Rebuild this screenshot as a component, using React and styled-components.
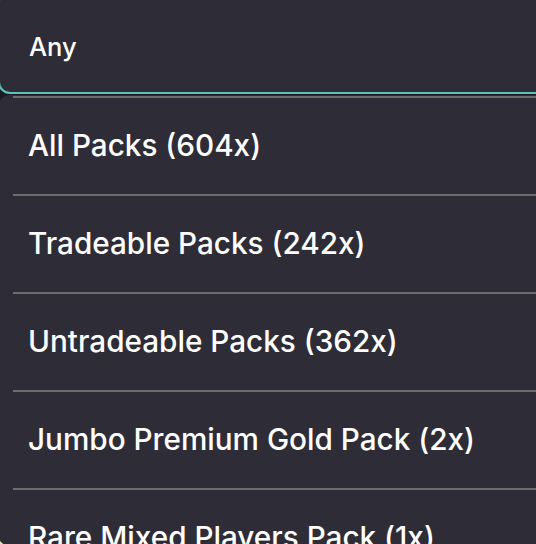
import styled, { createGlobalStyle } from "styled-components";

const GlobalStyle = createGlobalStyle`
    html, body {
        margin: 0;
        padding: 0;
        overflow: hidden;
        background: #1c1b21;
    }
    body {
        font-family: Inter, "Noto Sans", sans-serif;
        -webkit-font-smoothing: antialiased;
    }
`

const Pagina = styled.div`
        width: 536px;
        height: 544px;
        overflow: hidden;
        background: linear-gradient(to bottom, #1c1b21 0 500px, #f2e29a 500px);
`

const CampoSelect = styled.div`
        margin: -10px -20px 0 -2px;
        border: 2px solid #5ec3bb;
        border-radius: 12px;
        background-color: #2e2d37;
        display: flex;
        align-items: center;
        padding: 9px 0 0 29px;
        box-sizing: border-box;
        height: 104px;
        color: #ffffff;
        font-size: 25.5px;
        font-weight: 500;
`

const Lista = styled.ul`
        list-style: none;
        margin: 1px -20px 0 -2px;
        padding: 1px 0 0 0;
        height: 451px;
        overflow: hidden;
        background-color: #2e2d37;
        border-radius: 12px;
        box-sizing: border-box;
`

const Item = styled.li`
        margin-left: 15px;
        height: 98px;
        border-top: 2px solid #6d6d6d;
        box-sizing: border-box;
        display: flex;
        align-items: center;
        padding: 0 0 3px 15px;
        color: #ffffff;
        font-size: 29.7px;
        font-weight: 500;
        white-space: nowrap;
`

const opcoes = [
    "All Packs (604x)",
    "Tradeable Packs (242x)",
    "Untradeable Packs (362x)",
    "Jumbo Premium Gold Pack (2x)",
    "Rare Mixed Players Pack (1x)",
]

export default function App() {
    return (
        <Pagina>
            <GlobalStyle />
            <CampoSelect>Any</CampoSelect>
            <Lista>
                {opcoes.map((texto) => (
                    <Item key={texto}>{texto}</Item>
                ))}
            </Lista>
        </Pagina>
    )
}
